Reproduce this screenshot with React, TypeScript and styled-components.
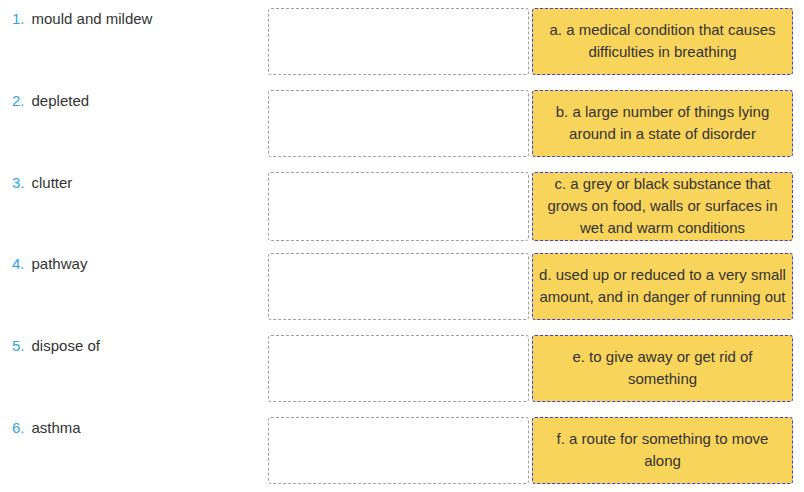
import React from "react";
import styled, { createGlobalStyle } from "styled-components";

const Global = createGlobalStyle`
  html, body { margin: 0; padding: 0; background: #fff; }
  body { font-family: "Liberation Sans", Arial, sans-serif; color: #333; }
`;

const List = styled.div`
  display: flex;
  flex-direction: column;
  gap: 15px;
  padding: 8px 11px 8px 8px;
`;

const Row = styled.div`
  display: grid;
  grid-template-columns: 257px 261px 261px;
  column-gap: 3px;
  height: 66.8px;
`;

const Label = styled.div`
  display: flex;
  gap: 7px;
  padding-left: 4px;
  padding-top: 1px;
  font-size: 15px;
  line-height: 20px;
  color: #333;
`;

const Num = styled.span`
  color: #2fa4e7;
`;

const Drop = styled.div`
  box-sizing: border-box;
  border: 1px dashed #a0a0a0;
  border-radius: 3px;
  background: #fff;
`;

const Card = styled.div`
  box-sizing: border-box;
  border: 1px dashed #3c3cf0;
  border-radius: 3px;
  background: #f8d45a;
  display: flex;
  align-items: center;
  justify-content: center;
  text-align: center;
  padding: 0 6px 1px;
  font-size: 15px;
  line-height: 22px;
  color: #333;
`;

const items = [
  ["mould and mildew", "a. a medical condition that causes difficulties in breathing"],
  ["depleted", "b. a large number of things lying around in a state of disorder"],
  ["clutter", "c. a grey or black substance that grows on food, walls or surfaces in wet and warm conditions"],
  ["pathway", "d. used up or reduced to a very small amount, and in danger of running out"],
  ["dispose of", "e. to give away or get rid of something"],
  ["asthma", "f. a route for something to move along"],
];

export default function App() {
  return (
    <>
      <Global />
      <List>
        {items.map(([word, def], i) => (
          <Row key={i}>
            <Label>
              <Num>{i + 1}.</Num>
              <span>{word}</span>
            </Label>
            <Drop />
            <Card>{def}</Card>
          </Row>
        ))}
      </List>
    </>
  );
}
